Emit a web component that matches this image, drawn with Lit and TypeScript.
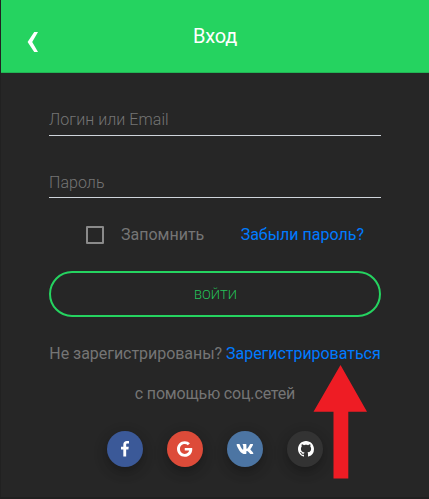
import { LitElement, html, css, svg } from "lit";
import { customElement } from "lit/decorators.js";

const socials = [
  {
    name: "facebook", box: "0 0 264 512", w: 8, h: 15.5,
    d: "M215.8 85H264V3.6C255.7 2.5 227.1 0 193.8 0 124.3 0 76.7 42.4 76.7 120.3V192H0v91h76.7v229h94V283h73.6l11.7-91h-85.3v-62.7c0-26.3 7.3-44.3 45.1-44.3z",
  },
  {
    name: "google", box: "0 0 488 512", w: 15.25, h: 16,
    d: "M488 261.8C488 403.3 391.1 504 248 504 110.8 504 0 393.2 0 256S110.8 8 248 8c66.8 0 123 24.5 166.3 64.9l-67.5 64.9C258.5 52.6 94.3 116.6 94.3 256c0 86.5 69.1 156.6 153.7 156.6 98.2 0 135-70.4 140.8-106.9H248v-85.3h236.1c2.3 12.7 3.9 24.9 3.9 41.4z",
  },
  {
    name: "vk", box: "0 0 576 512", w: 18, h: 16,
    d: "M545 117.7c3.7-12.5 0-21.7-17.8-21.7h-58.9c-15 0-21.9 7.9-25.6 16.7 0 0-30 73.1-72.4 120.5-13.7 13.7-20 18.1-27.5 18.1-3.7 0-9.4-4.4-9.4-16.9V117.7c0-15-4.2-21.7-16.6-21.7h-92.6c-9.4 0-15 7-15 13.5 0 14.2 21.2 17.5 23.4 57.5v86.8c0 19-3.4 22.5-10.9 22.5-20 0-68.6-73.4-97.4-157.4-5.8-16.3-11.5-22.9-26.6-22.9H38.8c-16.8 0-20.2 7.9-20.2 16.7 0 15.6 20 93.1 93.1 195.5C160.4 378.1 229 416 291.4 416c37.5 0 42.1-8.4 42.1-22.9 0-66.8-3.4-73.1 15.4-73.1 8.7 0 23.7 4.4 58.7 38.1 40 40 46.6 57.9 69 57.9h58.9c16.8 0 25.3-8.4 20.4-25-11.2-34.9-86.9-106.7-90.3-111.5-8.7-11.2-6.2-16.2 0-26.2.1-.1 72-101.3 79.4-135.6z",
  },
  {
    name: "github", box: "0 0 16 16", w: 16, h: 16,
    d: "M8 0C3.58 0 0 3.58 0 8c0 3.54 2.29 6.53 5.47 7.59.4.07.55-.17.55-.38 0-.19-.01-.82-.01-1.49-2.01.37-2.53-.49-2.69-.94-.09-.23-.48-.94-.82-1.13-.28-.15-.68-.52-.01-.53.63-.01 1.08.58 1.23.82.72 1.21 1.87.87 2.33.66.07-.52.28-.87.51-1.07-1.78-.2-3.64-.89-3.64-3.95 0-.87.31-1.59.82-2.15-.08-.2-.36-1.02.08-2.12 0 0 .67-.21 2.2.82.64-.18 1.32-.27 2-.27.68 0 1.36.09 2 .27 1.53-1.04 2.2-.82 2.2-.82.44 1.1.16 1.92.08 2.12.51.56.82 1.27.82 2.15 0 3.07-1.87 3.75-3.65 3.95.29.25.54.73.54 1.48 0 1.07-.01 1.93-.01 2.2 0 .21.15.46.55.38A8.013 8.013 0 0016 8c0-4.42-3.58-8-8-8z",
  },
];

@customElement("app-root")
export class AppRoot extends LitElement {
  static styles = css`
    :host {
      display: block;
      position: relative;
      box-sizing: border-box;
      height: 499px;
      overflow: hidden;
      background: #262626;
      border-left: 1px solid #212121;
      border-bottom: 2px solid #202020;
      font: 300 16px/24px Roboto, sans-serif;
      color: #757575;
    }
    * { box-sizing: border-box; }
    header {
      display: grid;
      grid-template-columns: 64px 1fr 64px;
      align-items: center;
      height: 73px;
      background: #25d360;
      border-bottom: 1px solid #22b455;
      color: #fff;
    }
    .back {
      width: 11px;
      height: 20px;
      margin: 11px 0 0 26px;
      fill: #fff;
    }
    .title {
      margin: 0;
      font-size: 20px;
      font-weight: 400;
      letter-spacing: -0.2px;
      text-align: center;
    }
    form {
      display: flex;
      flex-direction: column;
      padding: 25px 48px 0;
    }
    .field {
      width: 100%;
      height: 38px;
      padding: 8px 0 2px;
      border: 0;
      border-bottom: 1px solid #ced4da;
      border-radius: 0;
      outline: 0;
      background: transparent;
      color: #ccc;
      font: inherit;
      letter-spacing: 0.06px;
    }
    .field::placeholder { color: #757575; opacity: 1; }
    .field + .field { margin-top: 24px; padding-top: 9px; padding-bottom: 1px; }
    .options {
      display: flex;
      justify-content: space-between;
      margin-top: 25px;
      padding: 0 17px 0 37px;
      font-weight: 400;
    }
    .remember { display: flex; align-items: center; gap: 17px; }
    .box {
      width: 18px;
      height: 18px;
      margin-top: -1px;
      border: 2px solid #8a8a8a;
      border-radius: 1px;
    }
    a { color: #007bff; text-decoration: none; }
    .submit {
      height: 46px;
      margin-top: 24px;
      padding: 1px 0 0 1px;
      border: 2px solid #25d360;
      border-radius: 23px;
      background: transparent;
      color: #25c45b;
      font: 300 13px/20px Roboto, sans-serif;
      text-transform: uppercase;
    }
    .line {
      margin: 25px 0 0;
      font-weight: 400;
      letter-spacing: -0.04px;
      text-align: center;
      white-space: nowrap;
    }
    .line + .line { margin-top: 16px; letter-spacing: -0.16px; }
    .socials {
      display: flex;
      justify-content: center;
      gap: 24px;
      margin-top: 25px;
    }
    .social {
      display: grid;
      place-items: center;
      width: 36px;
      height: 36px;
      border-radius: 50%;
      fill: #fff;
      box-shadow: 0 5px 11px rgba(0, 0, 0, 0.18), 0 4px 15px rgba(0, 0, 0, 0.15);
    }
    .social svg { display: block; }
    .facebook { background: #3b5998; }
    .google { background: #dd4b39; }
    .vk { background: #4c75a3; }
    .github { background: #333; padding-left: 1px; }
    .arrow {
      position: absolute;
      left: 312px;
      top: 365px;
      width: 54px;
      height: 114px;
      fill: #ee1c24;
    }
  `;

  render() {
    return html`
      <header>
        <svg class="back" viewBox="0 0 11 20"><path d="M7.2 0H11L5.2 10L11 20H7.2L.6 10Z" /></svg>
        <h1 class="title">Вход</h1>
      </header>
      <form>
        <input class="field" type="text" placeholder="Логин или Email" />
        <input class="field" type="password" placeholder="Пароль" />
        <div class="options">
          <label class="remember"><span class="box"></span>Запомнить</label>
          <a>Забыли пароль?</a>
        </div>
        <button class="submit" type="button">Войти</button>
        <p class="line">Не зарегистрированы? <a>Зарегистрироваться</a></p>
        <p class="line">с помощью соц.сетей</p>
        <div class="socials">
          ${socials.map(
            (s) => html`<a class="social ${s.name}" aria-label=${s.name}>
              <svg viewBox=${s.box} width=${s.w} height=${s.h}>${svg`<path d=${s.d} />`}</svg>
            </a>`
          )}
        </div>
      </form>
      <svg class="arrow" viewBox="0 0 54 114">
        <path d="M27.5 0L54 46.7H35.3V113.5H20.5V46.7H.5Z" />
      </svg>
    `;
  }
}
